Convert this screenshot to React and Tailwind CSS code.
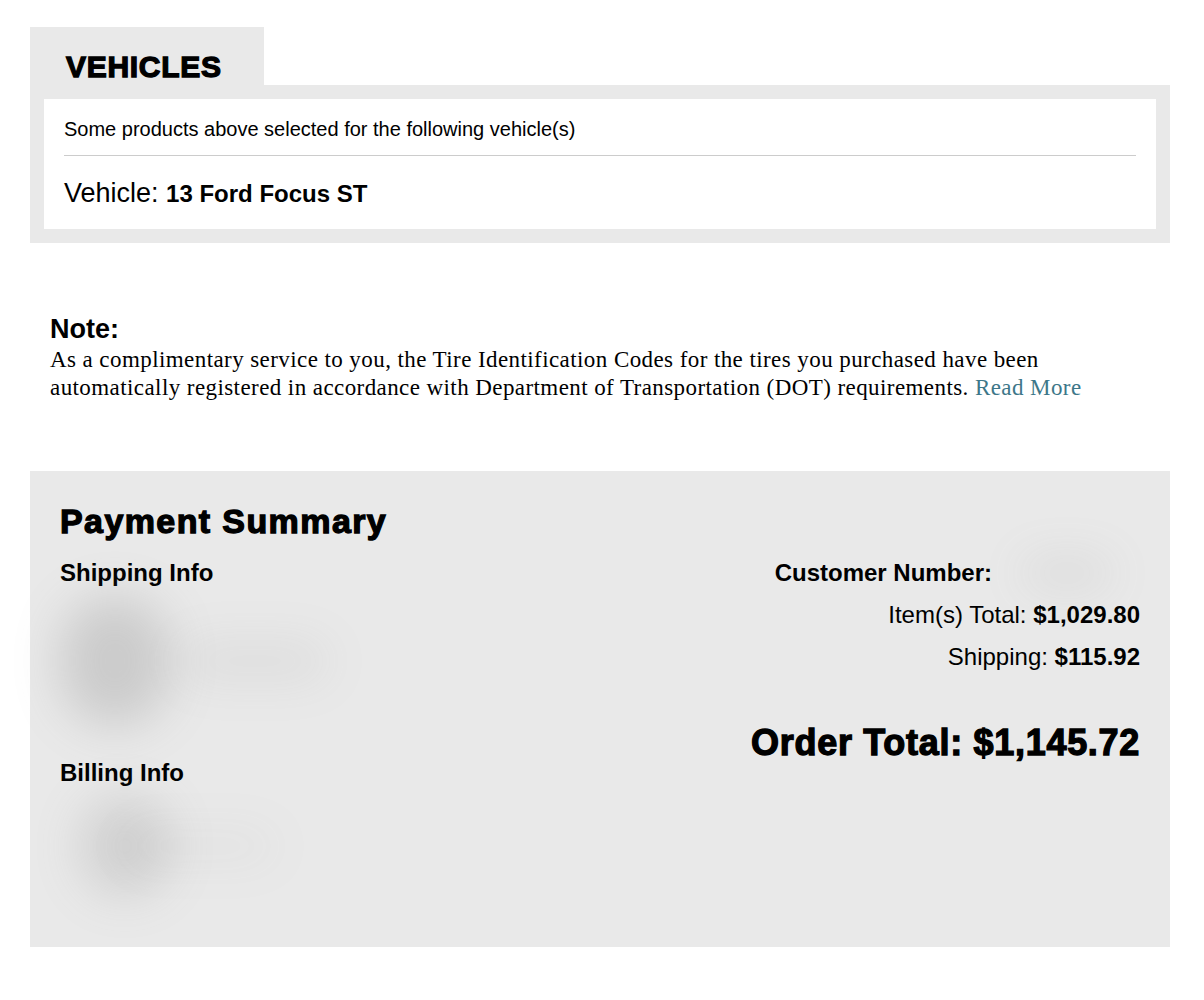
import React from "react";

const heavy = "font-black [-webkit-text-stroke:1.3px_black]";

const Blur = ({ className }) => (
  <div className={`rounded-full bg-neutral-500 blur-xl ${className}`} />
);

const App = () => {
  return (
    <div className="min-h-[1000px] bg-white pl-[30px] pr-[34px] pt-[27px] text-black font-['Liberation_Sans',Arial,sans-serif]">
      {/* Vehicles */}
      <div className="w-[234px] h-[58px] bg-[#e9e9e9] pl-[36px] pt-[24px]">
        <h2 className={`text-[30px] leading-[32px] tracking-[0.7px] ${heavy}`}>VEHICLES</h2>
      </div>
      <div className="bg-[#e9e9e9] p-[14px]">
        <div className="bg-white px-[20px] pt-[18px] pb-[19px]">
          <p className="text-[20px] leading-[24px] pb-[14px] border-b border-[#cccccc]">
            Some products above selected for the following vehicle(s)
          </p>
          <p className="text-[27px] leading-[32px] pt-[21px]">
            Vehicle: <span className="text-[24px] font-bold">13 Ford Focus ST</span>
          </p>
        </div>
      </div>

      {/* Note */}
      <div className="pl-[20px] pt-[72px]">
        <h3 className="text-[27px] leading-[28px] font-bold">Note:</h3>
        <p className="mt-[3px] text-[23px] leading-[28px] tracking-[0.42px] font-['Liberation_Serif',Georgia,serif] whitespace-nowrap">
          As a complimentary service to you, the Tire Identification Codes for the tires you purchased have been
          <br />
          automatically registered in accordance with Department of Transportation (DOT) requirements.{" "}
          <a className="text-[#3d7789]" href="#">Read More</a>
        </p>
      </div>

      {/* Payment */}
      <div className="mt-[69px] h-[476px] bg-[#e9e9e9] px-[30px] pt-[30px]">
        <h2 className={`text-[34px] leading-[40px] tracking-[1.4px] ${heavy}`}>Payment Summary</h2>
        <div className="flex justify-between pt-[19px]">
          <div className="flex flex-col">
            <h4 className="text-[24px] leading-[26px] font-bold">Shipping Info</h4>
            <div className="relative h-[174px] w-[300px]">
              <Blur className="absolute left-[0px] top-[10px] w-[110px] h-[130px] opacity-25" />
              <Blur className="absolute left-[120px] top-[55px] w-[150px] h-[40px] opacity-10" />
            </div>
            <h4 className="text-[24px] leading-[26px] font-bold">Billing Info</h4>
            <div className="relative h-[120px] w-[300px]">
              <Blur className="absolute left-[20px] top-[10px] w-[90px] h-[100px] opacity-20" />
              <Blur className="absolute left-[60px] top-[40px] w-[160px] h-[40px] opacity-5" />
            </div>
          </div>
          <div className="flex flex-col items-end">
            <div className="flex items-center">
              <span className="text-[24px] leading-[26px] font-bold">Customer Number:</span>
              <div className="relative w-[148px] h-[26px]">
                <Blur className="absolute left-[30px] top-[0px] w-[90px] h-[26px] opacity-15" />
              </div>
            </div>
            <p className="text-[24px] leading-[26px] mt-[16px]">
              Item(s) Total: <span className="font-bold">$1,029.80</span>
            </p>
            <p className="text-[24px] leading-[26px] mt-[16px]">
              Shipping: <span className="font-bold">$115.92</span>
            </p>
            <p className={`text-[36px] leading-[40px] tracking-[0.7px] mt-[53px] ${heavy}`}>Order Total: $1,145.72</p>
          </div>
        </div>
      </div>
    </div>
  );
};

export default App;
